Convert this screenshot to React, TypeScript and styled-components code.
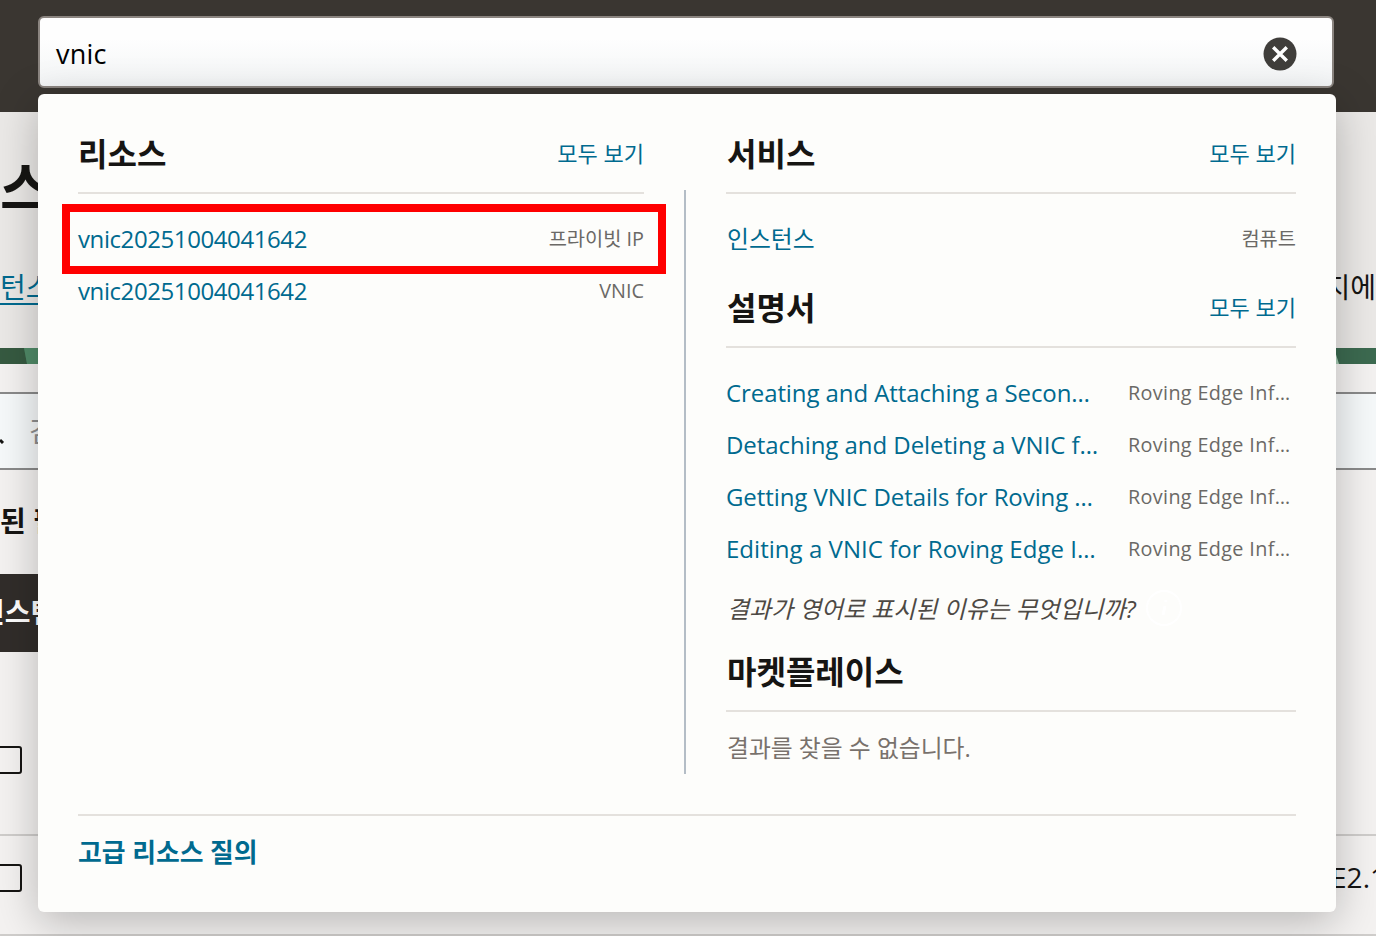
import styled, { createGlobalStyle, css } from 'styled-components';

const theme = {
  link: '#006a8f',
  text: '#161513',
  muted: '#6b6966',
  line: '#e4e1dd',
  panel: '#fdfdfb',
  font: "'Open Sans', 'Noto Sans CJK KR', sans-serif",
};

const GlobalStyle = createGlobalStyle`
  * {
    box-sizing: border-box;
  }

  body {
    margin: 0;
    overflow: hidden;
    background: #f4f2f1;
    color: ${theme.text};
    font-family: ${theme.font};
  }
`;

const Page = styled.div`
  position: relative;
  height: 936px;
  overflow: hidden;
`;

const TopBar = styled.header`
  height: 112px;
  padding: 16px 42px 0 38px;
  background: #3a3631;
`;

const SearchBox = styled.div`
  display: flex;
  align-items: center;
  justify-content: space-between;
  height: 72px;
  padding: 4px 35px 0 16px;
  border: 2px solid #8b8580;
  border-radius: 6px;
  background: linear-gradient(#fefefe 30%, #f3f5f6);
  color: #000;
  font-size: 27px;
  letter-spacing: 0.2px;
`;

const SearchText = styled.span`
  padding-bottom: 2px;
`;

const ClearButton = styled.button`
  display: flex;
  padding: 0;
  border: 0;
  background: none;
`;

const TitleBand = styled.div`
  height: 236px;
  padding-top: 33px;
  background: #ebe9e7;
`;

const PageTitle = styled.h1`
  margin: 0;
  font-size: 56px;
  line-height: 84px;
`;

const Crumbs = styled.div`
  display: flex;
  justify-content: space-between;
  margin-top: 38px;
  font-size: 28px;
  line-height: 40px;
  white-space: nowrap;
`;

const CrumbLink = styled.a`
  color: ${theme.link};
  text-decoration: underline;
  text-decoration-thickness: 2px;
  text-underline-offset: 5px;
`;

const Strip = styled.div`
  display: flex;
  justify-content: space-between;
  height: 16px;
  background: #3c6a50;
`;

const FilterInput = styled.div`
  display: flex;
  align-items: center;
  gap: 24px;
  height: 78px;
  margin-top: 28px;
  padding-bottom: 2px;
  border: solid #8a8a8a;
  border-width: 2px 0;
  background: #f6f9fa;
  color: #8f8f8f;
  font-size: 28px;
`;

const FilterLabel = styled.div`
  height: 104px;
  font-size: 28px;
  font-weight: 700;
  line-height: 102px;
`;

const TableHead = styled.div`
  width: 640px;
  height: 78px;
  padding-left: 5px;
  background: #312d2a;
  color: #fff;
  font-size: 28px;
  font-weight: 700;
  line-height: 76px;
  text-indent: -26px;
`;

const TableRow = styled.div<{ $height: number }>`
  display: flex;
  align-items: center;
  justify-content: space-between;
  height: ${({ $height }) => $height}px;
  border-bottom: 2px solid #cfcdcb;
`;

const Checkbox = styled.span`
  width: 28px;
  height: 28px;
  margin-left: -6px;
  border: 2px solid ${theme.text};
  border-radius: 3px;
`;

const Shape = styled.span`
  margin: 0 -10px 16px 0;
  font-size: 28px;
`;

const Panel = styled.section`
  position: absolute;
  top: 94px;
  left: 38px;
  width: 1298px;
  height: 818px;
  padding: 40px;
  border-radius: 6px;
  background: ${theme.panel};
  box-shadow: 0 10px 44px rgba(0, 0, 0, 0.25);
`;

const Columns = styled.div`
  display: grid;
  grid-template-columns: 566px 2px 570px;
  column-gap: 40px;
  height: 640px;
`;

const Divider = styled.div`
  margin-top: 56px;
  background: #b4bdc6;
`;

const SectionHead = styled.div<{ $gap?: number }>`
  display: flex;
  align-items: center;
  justify-content: space-between;
  height: 60px;
  margin-top: ${({ $gap = 0 }) => $gap}px;
  padding-bottom: 18px;
  border-bottom: 2px solid ${theme.line};
`;

const SectionTitle = styled.h2<{ $indent?: number }>`
  margin: 0;
  padding-left: ${({ $indent = 0 }) => $indent}px;
  font-size: 32px;
  font-weight: 700;
  line-height: 40px;
`;

const ViewAll = styled.a`
  padding-bottom: 5px;
  color: ${theme.link};
  font-size: 22px;
`;

const List = styled.div`
  padding-top: 19px;
`;

const Row = styled.div<{ $highlight?: boolean }>`
  position: relative;
  display: flex;
  align-items: center;
  justify-content: space-between;
  height: 52px;
  padding-bottom: 2px;
  white-space: nowrap;

  ${({ $highlight }) =>
    $highlight &&
    css`
      &::after {
        content: '';
        position: absolute;
        inset: -9px -22px -9px -16px;
        border: 8px solid #ff0000;
      }
    `}
`;

const RowLink = styled.a<{ $spacing?: number }>`
  color: ${theme.link};
  font-size: 24px;
  letter-spacing: ${({ $spacing = 0 }) => $spacing}px;
`;

const ServiceLink = styled(RowLink)`
  padding: 0 0 1px 1px;
  font-size: 23.8px;
`;

const Meta = styled.span<{ $width?: number; $raised?: boolean }>`
  width: ${({ $width }) => ($width ? `${$width}px` : 'auto')};
  padding-bottom: ${({ $raised }) => ($raised ? 2 : 0)}px;
  color: ${theme.muted};
  font-size: 19.8px;
  letter-spacing: ${({ $width }) => ($width ? 0.35 : 0)}px;
`;

const LanguageNote = styled.div`
  display: flex;
  align-items: center;
  gap: 9px;
  height: 68px;
  margin-top: 9px;
  padding: 0 0 22px 1px;
  color: #4d4944;
  font-size: 23.9px;
  font-style: italic;
  white-space: nowrap;
`;

const Empty = styled.p`
  margin: 0;
  padding: 11px 0 0 1px;
  color: #78716c;
  font-size: 23.8px;
  line-height: 51px;
`;

const Footer = styled.footer`
  margin-top: 40px;
  padding-top: 16px;
  border-top: 2px solid ${theme.line};
`;

const FooterLink = styled.a`
  color: ${theme.link};
  font-size: 25.8px;
  font-weight: 700;
  line-height: 40px;
`;

const docs = [
  { title: 'Creating and Attaching a Secon…', spacing: -0.09 },
  { title: 'Detaching and Deleting a VNIC f…', spacing: -0.05 },
  { title: 'Getting VNIC Details for Roving …', spacing: -0.08 },
  { title: 'Editing a VNIC for Roving Edge I…', spacing: 0.03 },
];

const ClearIcon = () => (
  <svg width="34" height="34" viewBox="0 0 34 34">
    <circle cx="17" cy="17" r="16.5" fill="#403e3b" />
    <path d="M10.2 10.2 23.8 23.8M23.8 10.2 10.2 23.8" stroke="#fff" strokeWidth="3.4" />
  </svg>
);

const InfoIcon = () => (
  <svg width="38" height="38" viewBox="0 0 38 38" fill="none" stroke="#fff" strokeWidth="2">
    <circle cx="19" cy="20" r="17" />
    <path d="M20 18 18 27M21 12 20.6 14" strokeWidth="3" />
  </svg>
);

const Background = () => (
  <>
    <TitleBand>
      <PageTitle>스</PageTitle>
      <Crumbs>
        <CrumbLink>턴스</CrumbLink>
        <span>지에</span>
      </Crumbs>
    </TitleBand>
    <Strip>
      <svg width="60" height="16">
        <path d="M0 0H24L27 16H0Z" fill="#365a41" />
        <path d="M24 0H60V16H27Z" fill="#508b68" />
      </svg>
      <svg width="42" height="16">
        <path d="M0 0 5 16H0Z" fill="#a9cdb6" />
      </svg>
    </Strip>
    <FilterInput>
      <svg width="5" height="28">
        <path d="M0 24 3 27" stroke="#161513" strokeWidth="3" />
      </svg>
      <span>검색</span>
    </FilterInput>
    <FilterLabel>된 필</FilterLabel>
    <TableHead>인스턴</TableHead>
    <TableRow $height={184}>
      <Checkbox style={{ marginTop: 34 }} />
    </TableRow>
    <TableRow $height={100}>
      <Checkbox style={{ marginBottom: 14 }} />
      <Shape>E2.1</Shape>
    </TableRow>
  </>
);

const App = () => {
  return (
    <>
      <GlobalStyle />
      <Page>
        <TopBar>
          <SearchBox>
            <SearchText>vnic</SearchText>
            <ClearButton aria-label="clear">
              <ClearIcon />
            </ClearButton>
          </SearchBox>
        </TopBar>
        <Background />
        <Panel>
          <Columns>
            <div>
              <SectionHead>
                <SectionTitle>리소스</SectionTitle>
                <ViewAll>모두 보기</ViewAll>
              </SectionHead>
              <List>
                <Row $highlight>
                  <RowLink $spacing={-0.41}>vnic20251004041642</RowLink>
                  <Meta $raised>프라이빗 IP</Meta>
                </Row>
                <Row>
                  <RowLink $spacing={-0.41}>vnic20251004041642</RowLink>
                  <Meta>VNIC</Meta>
                </Row>
              </List>
            </div>
            <Divider />
            <div>
              <SectionHead>
                <SectionTitle $indent={1}>서비스</SectionTitle>
                <ViewAll>모두 보기</ViewAll>
              </SectionHead>
              <List>
                <Row>
                  <ServiceLink>인스턴스</ServiceLink>
                  <Meta $raised>컴퓨트</Meta>
                </Row>
              </List>
              <SectionHead $gap={23}>
                <SectionTitle $indent={1}>설명서</SectionTitle>
                <ViewAll>모두 보기</ViewAll>
              </SectionHead>
              <List>
                {docs.map(({ title, spacing }) => (
                  <Row key={title}>
                    <RowLink $spacing={spacing}>{title}</RowLink>
                    <Meta $width={168}>Roving Edge Inf…</Meta>
                  </Row>
                ))}
              </List>
              <LanguageNote>
                <span>결과가 영어로 표시된 이유는 무엇입니까?</span>
                <InfoIcon />
              </LanguageNote>
              <SectionHead>
                <SectionTitle $indent={1}>마켓플레이스</SectionTitle>
              </SectionHead>
              <Empty>결과를 찾을 수 없습니다.</Empty>
            </div>
          </Columns>
          <Footer>
            <FooterLink>고급 리소스 질의</FooterLink>
          </Footer>
        </Panel>
      </Page>
    </>
  );
};

export default App;
